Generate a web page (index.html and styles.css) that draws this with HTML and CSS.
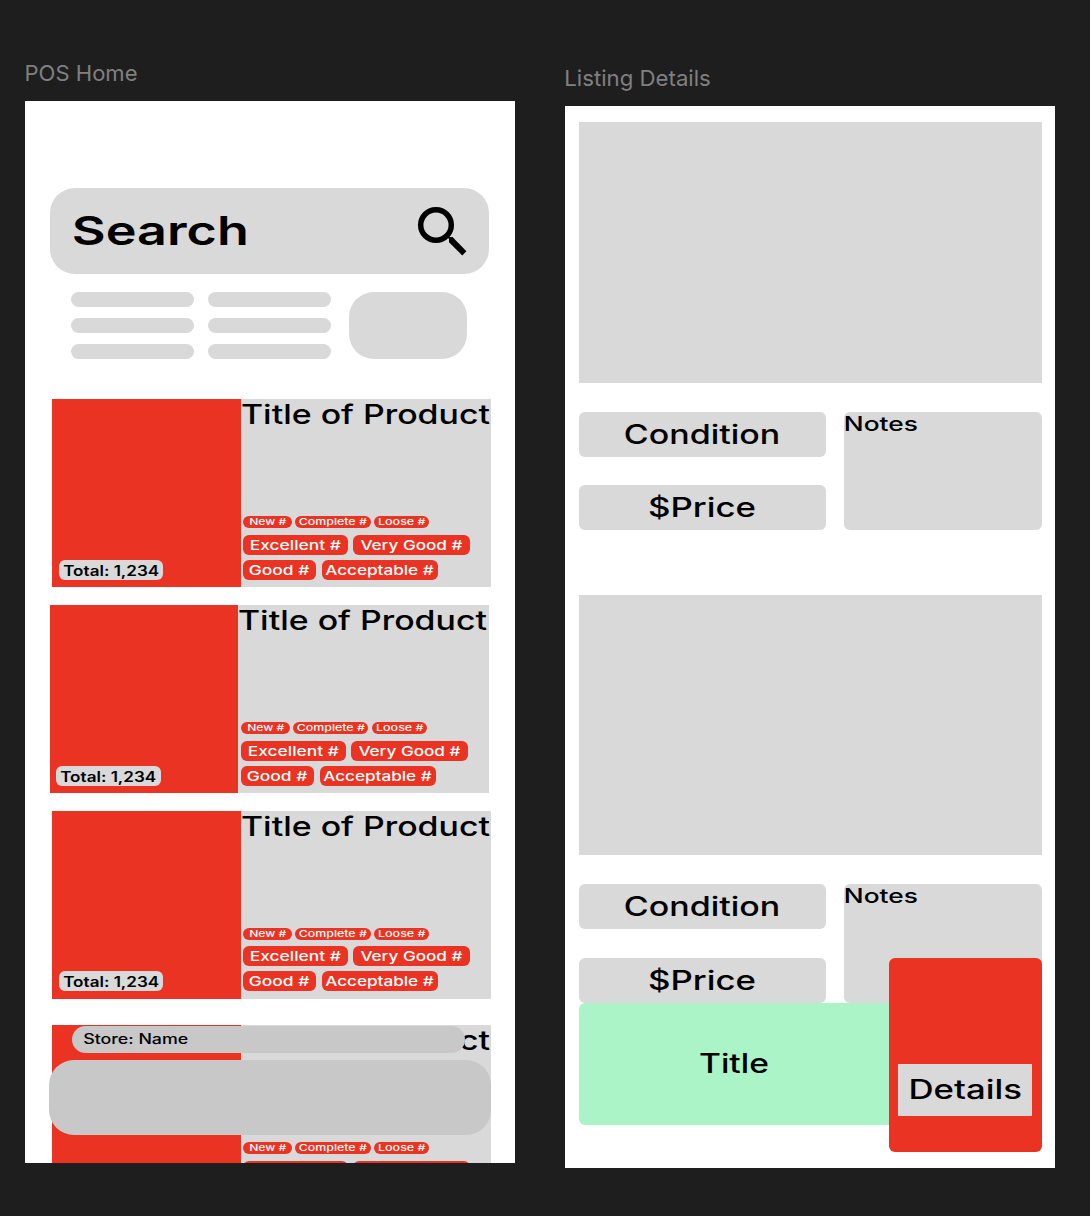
FILE: index.html
```html
<!DOCTYPE html>
<html lang="en">
<head>
<meta charset="utf-8">
<title>POS wireframes</title>
<link rel="stylesheet" href="styles.css">
</head>
<body>
<main class="canvas">
  <section class="frame">
    <h2 class="frame-name"><svg class="label"><text x="-0.5" y="21" textLength="113" lengthAdjust="spacingAndGlyphs">POS Home</text></svg></h2>
    <div class="board home">
      <div class="search">
        <svg class="label search-text"><text x="21.8" y="56.8" textLength="177" lengthAdjust="spacingAndGlyphs">Search</text></svg>
        <svg class="search-icon" viewBox="0 0 50 50"><circle cx="19" cy="19" r="15.3" fill="none" stroke="#000" stroke-width="5.5"/><path d="M30.8 31.8 32.5 31h3L49.4 45.2l-4.1 4.2L32 36.2V33z"/></svg>
      </div>
      <div class="filters">
        <div class="lines"><i></i><i></i><i></i></div>
        <div class="lines"><i></i><i></i><i></i></div>
        <div class="filter-button"></div>
      </div>
      <div class="products">
        <article class="card">
          <div class="thumb"><span class="total"><svg class="label"><text x="4.2" y="15.5" textLength="96" lengthAdjust="spacingAndGlyphs">Total: 1,234</text></svg></span></div>
          <div class="info">
            <svg class="label title"><text x="0" y="25" textLength="249" lengthAdjust="spacingAndGlyphs">Title of Product</text></svg>
            <div class="tags small"><span class="new"><svg class="label"><text x="6.2" y="9.3" textLength="37" lengthAdjust="spacingAndGlyphs">New #</text></svg></span><span class="complete"><svg class="label"><text x="3.8" y="9.3" textLength="68" lengthAdjust="spacingAndGlyphs">Complete #</text></svg></span><span class="loose"><svg class="label"><text x="4" y="9.3" textLength="47.5" lengthAdjust="spacingAndGlyphs">Loose #</text></svg></span></div>
            <div class="tags"><span class="excellent"><svg class="label"><text x="6.8" y="15.2" textLength="91" lengthAdjust="spacingAndGlyphs">Excellent #</text></svg></span><span class="very-good"><svg class="label"><text x="7.4" y="15.2" textLength="102" lengthAdjust="spacingAndGlyphs">Very Good #</text></svg></span></div>
            <div class="tags last"><span class="good"><svg class="label"><text x="5.8" y="15.2" textLength="60.5" lengthAdjust="spacingAndGlyphs">Good #</text></svg></span><span class="acceptable"><svg class="label"><text x="3.2" y="15.2" textLength="108.5" lengthAdjust="spacingAndGlyphs">Acceptable #</text></svg></span></div>
          </div>
        </article>
        <article class="card shifted">
          <div class="thumb"><span class="total"><svg class="label"><text x="4.2" y="15.5" textLength="96" lengthAdjust="spacingAndGlyphs">Total: 1,234</text></svg></span></div>
          <div class="info">
            <svg class="label title"><text x="0" y="25" textLength="249" lengthAdjust="spacingAndGlyphs">Title of Product</text></svg>
            <div class="tags small"><span class="new"><svg class="label"><text x="6.2" y="9.3" textLength="37" lengthAdjust="spacingAndGlyphs">New #</text></svg></span><span class="complete"><svg class="label"><text x="3.8" y="9.3" textLength="68" lengthAdjust="spacingAndGlyphs">Complete #</text></svg></span><span class="loose"><svg class="label"><text x="4" y="9.3" textLength="47.5" lengthAdjust="spacingAndGlyphs">Loose #</text></svg></span></div>
            <div class="tags"><span class="excellent"><svg class="label"><text x="6.8" y="15.2" textLength="91" lengthAdjust="spacingAndGlyphs">Excellent #</text></svg></span><span class="very-good"><svg class="label"><text x="7.4" y="15.2" textLength="102" lengthAdjust="spacingAndGlyphs">Very Good #</text></svg></span></div>
            <div class="tags last"><span class="good"><svg class="label"><text x="5.8" y="15.2" textLength="60.5" lengthAdjust="spacingAndGlyphs">Good #</text></svg></span><span class="acceptable"><svg class="label"><text x="3.2" y="15.2" textLength="108.5" lengthAdjust="spacingAndGlyphs">Acceptable #</text></svg></span></div>
          </div>
        </article>
        <article class="card">
          <div class="thumb"><span class="total"><svg class="label"><text x="4.2" y="15.5" textLength="96" lengthAdjust="spacingAndGlyphs">Total: 1,234</text></svg></span></div>
          <div class="info">
            <svg class="label title"><text x="0" y="25" textLength="249" lengthAdjust="spacingAndGlyphs">Title of Product</text></svg>
            <div class="tags small"><span class="new"><svg class="label"><text x="6.2" y="9.3" textLength="37" lengthAdjust="spacingAndGlyphs">New #</text></svg></span><span class="complete"><svg class="label"><text x="3.8" y="9.3" textLength="68" lengthAdjust="spacingAndGlyphs">Complete #</text></svg></span><span class="loose"><svg class="label"><text x="4" y="9.3" textLength="47.5" lengthAdjust="spacingAndGlyphs">Loose #</text></svg></span></div>
            <div class="tags"><span class="excellent"><svg class="label"><text x="6.8" y="15.2" textLength="91" lengthAdjust="spacingAndGlyphs">Excellent #</text></svg></span><span class="very-good"><svg class="label"><text x="7.4" y="15.2" textLength="102" lengthAdjust="spacingAndGlyphs">Very Good #</text></svg></span></div>
            <div class="tags last"><span class="good"><svg class="label"><text x="5.8" y="15.2" textLength="60.5" lengthAdjust="spacingAndGlyphs">Good #</text></svg></span><span class="acceptable"><svg class="label"><text x="3.2" y="15.2" textLength="108.5" lengthAdjust="spacingAndGlyphs">Acceptable #</text></svg></span></div>
          </div>
        </article>
        <article class="card cut">
          <div class="thumb"></div>
          <div class="info">
            <svg class="label title"><text x="0" y="25" textLength="249" lengthAdjust="spacingAndGlyphs">Title of Product</text></svg>
            <div class="tags small"><span class="new"><svg class="label"><text x="6.2" y="9.3" textLength="37" lengthAdjust="spacingAndGlyphs">New #</text></svg></span><span class="complete"><svg class="label"><text x="3.8" y="9.3" textLength="68" lengthAdjust="spacingAndGlyphs">Complete #</text></svg></span><span class="loose"><svg class="label"><text x="4" y="9.3" textLength="47.5" lengthAdjust="spacingAndGlyphs">Loose #</text></svg></span></div>
            <div class="tags"><span class="excellent"></span><span class="very-good"></span></div>
          </div>
        </article>
      </div>
      <div class="store"><svg class="label"><text x="11.2" y="17.8" textLength="105" lengthAdjust="spacingAndGlyphs">Store: Name</text></svg></div>
      <div class="nav"></div>
    </div>
  </section>

  <section class="frame second">
    <h2 class="frame-name"><svg class="label"><text x="-0.7" y="21" textLength="146.5" lengthAdjust="spacingAndGlyphs">Listing Details</text></svg></h2>
    <div class="board details">
      <article class="listing">
        <div class="photo"></div>
        <div class="facts">
          <div class="fact"><svg class="label"><text x="44.8" y="31.7" textLength="156.5" lengthAdjust="spacingAndGlyphs">Condition</text></svg></div>
          <div class="notes"><svg class="label"><text x="-0.2" y="19.2" textLength="74" lengthAdjust="spacingAndGlyphs">Notes</text></svg></div>
          <div class="fact"><svg class="label"><text x="69" y="31.7" textLength="108" lengthAdjust="spacingAndGlyphs">$Price</text></svg></div>
        </div>
      </article>
      <article class="listing">
        <div class="photo"></div>
        <div class="facts">
          <div class="fact"><svg class="label"><text x="44.8" y="31.7" textLength="156.5" lengthAdjust="spacingAndGlyphs">Condition</text></svg></div>
          <div class="notes"><svg class="label"><text x="-0.2" y="19.2" textLength="74" lengthAdjust="spacingAndGlyphs">Notes</text></svg></div>
          <div class="fact"><svg class="label"><text x="69" y="31.7" textLength="108" lengthAdjust="spacingAndGlyphs">$Price</text></svg></div>
        </div>
      </article>
      <div class="title-bar"><svg class="label"><text x="120" y="70" textLength="70" lengthAdjust="spacingAndGlyphs">Title</text></svg></div>
      <div class="details-panel"><div class="details-box"><svg class="label"><text x="10.5" y="35" textLength="113.5" lengthAdjust="spacingAndGlyphs">Details</text></svg></div></div>
    </div>
  </section>
</main>
</body>
</html>
```
FILE: styles.css
```css
* { box-sizing: border-box; }
body { margin: 0; background: #1e1e1e; font-family: Inter, "Liberation Sans", sans-serif; }
.canvas { display: flex; gap: 50px; height: 1216px; padding: 60px 35px 0 25px; overflow: hidden; }
.frame { width: 490px; flex: none; }
.frame.second { padding-top: 5px; }
.frame-name { height: 41px; margin: 0; font-size: 22px; font-weight: 400; }
.frame-name text { fill: #808080; }
.label { display: block; width: 100%; height: 100%; overflow: visible; }
.board { position: relative; width: 490px; height: 1062.4px; background: #fff; overflow: hidden; font-weight: 500; }

.home { padding: 87.3px 0 0 25px; }
.search { display: flex; justify-content: space-between; align-items: center; width: 439px; height: 85.7px; border-radius: 25px; background: #d9d9d9; padding-right: 22px; }
.search-text { width: 200px; font-size: 39.5px; font-weight: 600; }
.search-icon { width: 50px; height: 50px; }
.filters { display: flex; margin: 18px 0 0 21px; height: 67px; }
.lines { display: flex; flex-direction: column; justify-content: space-between; width: 122.5px; margin-right: 14.5px; }
.lines + .lines { margin-right: 18.5px; }
.lines i { height: 14.8px; border-radius: 8px; background: #d9d9d9; }
.filter-button { width: 117.5px; border-radius: 25px; background: #d9d9d9; }

.products { display: flex; flex-direction: column; gap: 17.7px; padding: 40.3px 0 0 2.4px; }
.card { display: flex; flex: none; width: 439px; height: 188px; background: #d9d9d9; }
.card.shifted { margin-left: -2.4px; }
.card.cut { margin-top: 8.6px; }
.thumb { display: flex; align-items: flex-end; width: 188.4px; padding: 0 0 7.3px 6.3px; background: #ea3323; }
.total { width: 104.7px; height: 20px; border-radius: 6px; background: #d9d9d9; font-size: 13.8px; font-weight: 600; }
.info { flex: 1; padding-left: 2.2px; }
.title { height: 117px; margin-left: -2.2px; font-size: 26.6px; }
.tags { display: flex; gap: 5px; height: 20px; margin-bottom: 5px; font-size: 13.4px; }
.tags.small { gap: 3.4px; height: 12px; margin-bottom: 6.8px; font-size: 9.2px; }
.tags.last { gap: 6px; }
.tags span { border-radius: 6px; background: #ea3323; }
.tags text { fill: #fff; }
.new { width: 49px; }
.complete { width: 75.3px; }
.loose { width: 55.2px; }
.excellent { width: 105px; }
.very-good { width: 117.5px; }
.good { width: 73px; }
.acceptable { width: 116.5px; }

.store { position: absolute; left: 47.4px; top: 925.2px; width: 393px; height: 26.5px; border-radius: 14px; background: #c8c8c8; font-size: 13.8px; }
.nav { position: absolute; left: 24px; top: 959px; width: 442.4px; height: 74.8px; border-radius: 25px; background: #c8c8c8; }

.details { padding: 16.3px 0 0 13.7px; font-weight: 550; }
.listing { width: 463px; margin-bottom: 64.5px; }
.photo { height: 260.4px; background: #d9d9d9; }
.facts { display: grid; grid-template: 45px 44.7px / 247px 197.3px; gap: 28.8px 18.7px; margin-top: 29px; }
.fact, .notes { border-radius: 6px; background: #d9d9d9; font-size: 26.6px; }
.notes { grid-row: 1 / 3; grid-column: 2; font-size: 20px; }
.title-bar { position: absolute; left: 13.7px; top: 896.8px; width: 340px; height: 122.2px; border-radius: 6px; background: #abf4c8; font-size: 26.6px; }
.details-panel { position: absolute; left: 324px; top: 851.6px; width: 152.6px; height: 194.8px; padding: 106.4px 10px 0 9px; border-radius: 6px; background: #ea3323; }
.details-box { height: 52px; background: #d9d9d9; font-size: 26.6px; }
```
